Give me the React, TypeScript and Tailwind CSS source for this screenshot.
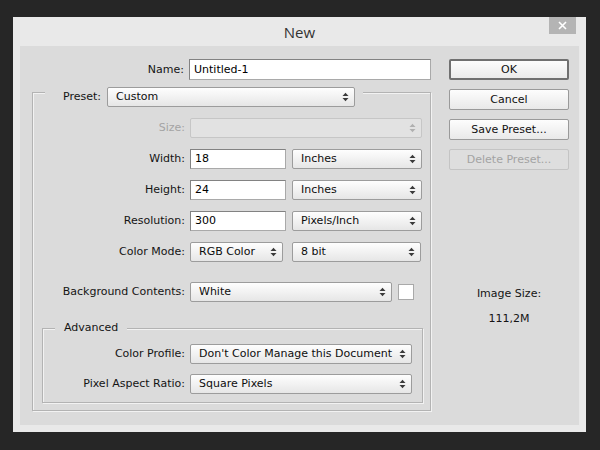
import React from "react";

function Arrows({ disabled }: { disabled?: boolean }) {
  return (
    <svg width="7" height="10" viewBox="0 0 7 10" className="shrink-0">
      <polygon points="0.5,4 3.5,0.8 6.5,4" fill={disabled ? "#b0b0b0" : "#3a3a3a"} />
      <polygon points="0.5,6 3.5,9.2 6.5,6" fill={disabled ? "#b0b0b0" : "#3a3a3a"} />
    </svg>
  );
}

function Select({ w, value, disabled }: { w: string; value?: string; disabled?: boolean }) {
  return (
    <div
      className={`${w} h-[20px] shrink-0 rounded-[2px] border flex items-center pl-[8px] pr-[5px] ${
        disabled
          ? "border-[#c6c6c6] bg-[#e2e2e2]"
          : "border-[#9c9c9c] bg-gradient-to-b from-[#fefefe] to-[#e6e6e6]"
      }`}
    >
      <span className="flex-1 whitespace-nowrap overflow-hidden text-[#0e0e0e]">{value}</span>
      <Arrows disabled={disabled} />
    </div>
  );
}

function Input({ w, h, value }: { w: string; h: string; value: string }) {
  return (
    <div
      className={`${w} ${h} shrink-0 border border-[#828282] border-b-[#a9a9a9] border-r-[#a9a9a9] bg-white flex items-center pl-[4px] text-black`}
    >
      {value}
    </div>
  );
}

function Button({ label, primary, disabled }: { label: string; primary?: boolean; disabled?: boolean }) {
  return (
    <div
      className={`w-[120px] h-[21px] rounded-[2px] flex items-center justify-center ${
        primary
          ? "border-2 border-[#707070] bg-gradient-to-b from-[#fdfdfd] to-[#ebebeb] text-[#111]"
          : disabled
          ? "border border-[#c4c4c4] bg-[#dedede] text-[#a3a3a3]"
          : "border border-[#9a9a9a] bg-gradient-to-b from-[#fdfdfd] to-[#e9e9e9] text-[#111]"
      }`}
    >
      {label}
    </div>
  );
}

export default function App() {
  return (
    <div className="w-[600px] h-[450px] bg-[#262626] pt-[17px] pl-[13px] font-['DejaVu_Sans',sans-serif] text-[11px] leading-[14px] text-[#141414]">
      <div className="w-[573px] h-[415px] bg-[#e9e9e9] flex flex-col">
        {/* title bar */}
        <div className="h-[29px] relative flex items-center justify-center shrink-0">
          <span className="font-['Open_Sans',sans-serif] text-[15px] text-[#333] mt-[1px]">New</span>
          <div className="absolute right-[10px] top-0 w-[27px] h-[17px] bg-[#b4b4b4] flex items-center justify-center">
            <svg width="9" height="9" viewBox="0 0 9 9">
              <path d="M1 1 L8 8 M8 1 L1 8" stroke="#fff" strokeWidth="1.6" />
            </svg>
          </div>
        </div>
        {/* content */}
        <div className="mx-[7px] mb-[7px] flex-1 bg-[#dbdbdb] flex">
          {/* left column */}
          <div className="w-[411px] shrink-0 flex flex-col pt-[13px]">
            <div className="flex items-center h-[21px]">
              <div className="w-[165px] text-right">Name:</div>
              <div className="ml-[5px]">
                <Input w="w-[242px]" h="h-[21px]" value="Untitled-1" />
              </div>
            </div>
            {/* Preset fieldset */}
            <div className="ml-[12px] mt-[12px] w-[399px] h-[319px] border border-[#b3b3b3] shadow-[inset_1px_1px_0_#f2f2f2,1px_1px_0_#f2f2f2] flex flex-col">
              <div className="flex items-center mt-[-6px] ml-[12px] w-[318px] bg-[#dbdbdb] pl-[18px]">
                <span>Preset:</span>
                <div className="ml-[6px]">
                  <Select w="w-[248px]" value="Custom" />
                </div>
              </div>
              <div className="flex flex-col gap-[11px] mt-[11px]">
                <div className="flex items-center h-[20px]">
                  <div className="w-[152px] text-right text-[#a4a4a4]">Size:</div>
                  <div className="ml-[5px]">
                    <Select w="w-[232px]" disabled />
                  </div>
                </div>
                <div className="flex items-center h-[20px]">
                  <div className="w-[152px] text-right">Width:</div>
                  <div className="ml-[5px] flex items-center gap-[6px]">
                    <Input w="w-[96px]" h="h-[20px]" value="18" />
                    <Select w="w-[130px]" value="Inches" />
                  </div>
                </div>
                <div className="flex items-center h-[20px]">
                  <div className="w-[152px] text-right">Height:</div>
                  <div className="ml-[5px] flex items-center gap-[6px]">
                    <Input w="w-[96px]" h="h-[20px]" value="24" />
                    <Select w="w-[130px]" value="Inches" />
                  </div>
                </div>
                <div className="flex items-center h-[20px]">
                  <div className="w-[152px] text-right">Resolution:</div>
                  <div className="ml-[5px] flex items-center gap-[6px]">
                    <Input w="w-[96px]" h="h-[20px]" value="300" />
                    <Select w="w-[130px]" value="Pixels/Inch" />
                  </div>
                </div>
                <div className="flex items-center h-[20px]">
                  <div className="w-[152px] text-right">Color Mode:</div>
                  <div className="ml-[5px] flex items-center gap-[9px]">
                    <Select w="w-[93px]" value="RGB Color" />
                    <Select w="w-[129px]" value="8 bit" />
                  </div>
                </div>
              </div>
              <div className="flex items-center h-[20px] mt-[20px]">
                <div className="w-[152px] text-right">Background Contents:</div>
                <div className="ml-[5px] flex items-center gap-[6px]">
                  <Select w="w-[202px]" value="White" />
                  <div className="w-[16px] h-[16px] bg-white border border-[#a9a9a9]" />
                </div>
              </div>
              {/* Advanced fieldset */}
              <div className="relative ml-[9px] mt-[26px] w-[381px] h-[75px] border border-[#b3b3b3] shadow-[inset_1px_1px_0_#f2f2f2,1px_1px_0_#f2f2f2] flex flex-col">
                <div className="absolute left-[12px] top-[-8px] bg-[#dbdbdb] px-[9px]">Advanced</div>
                <div className="flex flex-col gap-[10px] mt-[15px]">
                  <div className="flex items-center h-[20px]">
                    <div className="w-[142px] text-right">Color Profile:</div>
                    <div className="ml-[5px]">
                      <Select w="w-[222px]" value="Don't Color Manage this Document" />
                    </div>
                  </div>
                  <div className="flex items-center h-[20px]">
                    <div className="w-[142px] text-right">Pixel Aspect Ratio:</div>
                    <div className="ml-[5px]">
                      <Select w="w-[222px]" value="Square Pixels" />
                    </div>
                  </div>
                </div>
              </div>
            </div>
          </div>
          {/* right column */}
          <div className="ml-[18px] w-[120px] flex flex-col pt-[13px]">
            <div className="flex flex-col gap-[9px]">
              <Button label="OK" primary />
              <Button label="Cancel" />
              <Button label="Save Preset..." />
              <Button label="Delete Preset..." disabled />
            </div>
            <div className="mt-[117px] text-center">Image Size:</div>
            <div className="mt-[11px] text-center">111,2M</div>
          </div>
        </div>
      </div>
    </div>
  );
}
